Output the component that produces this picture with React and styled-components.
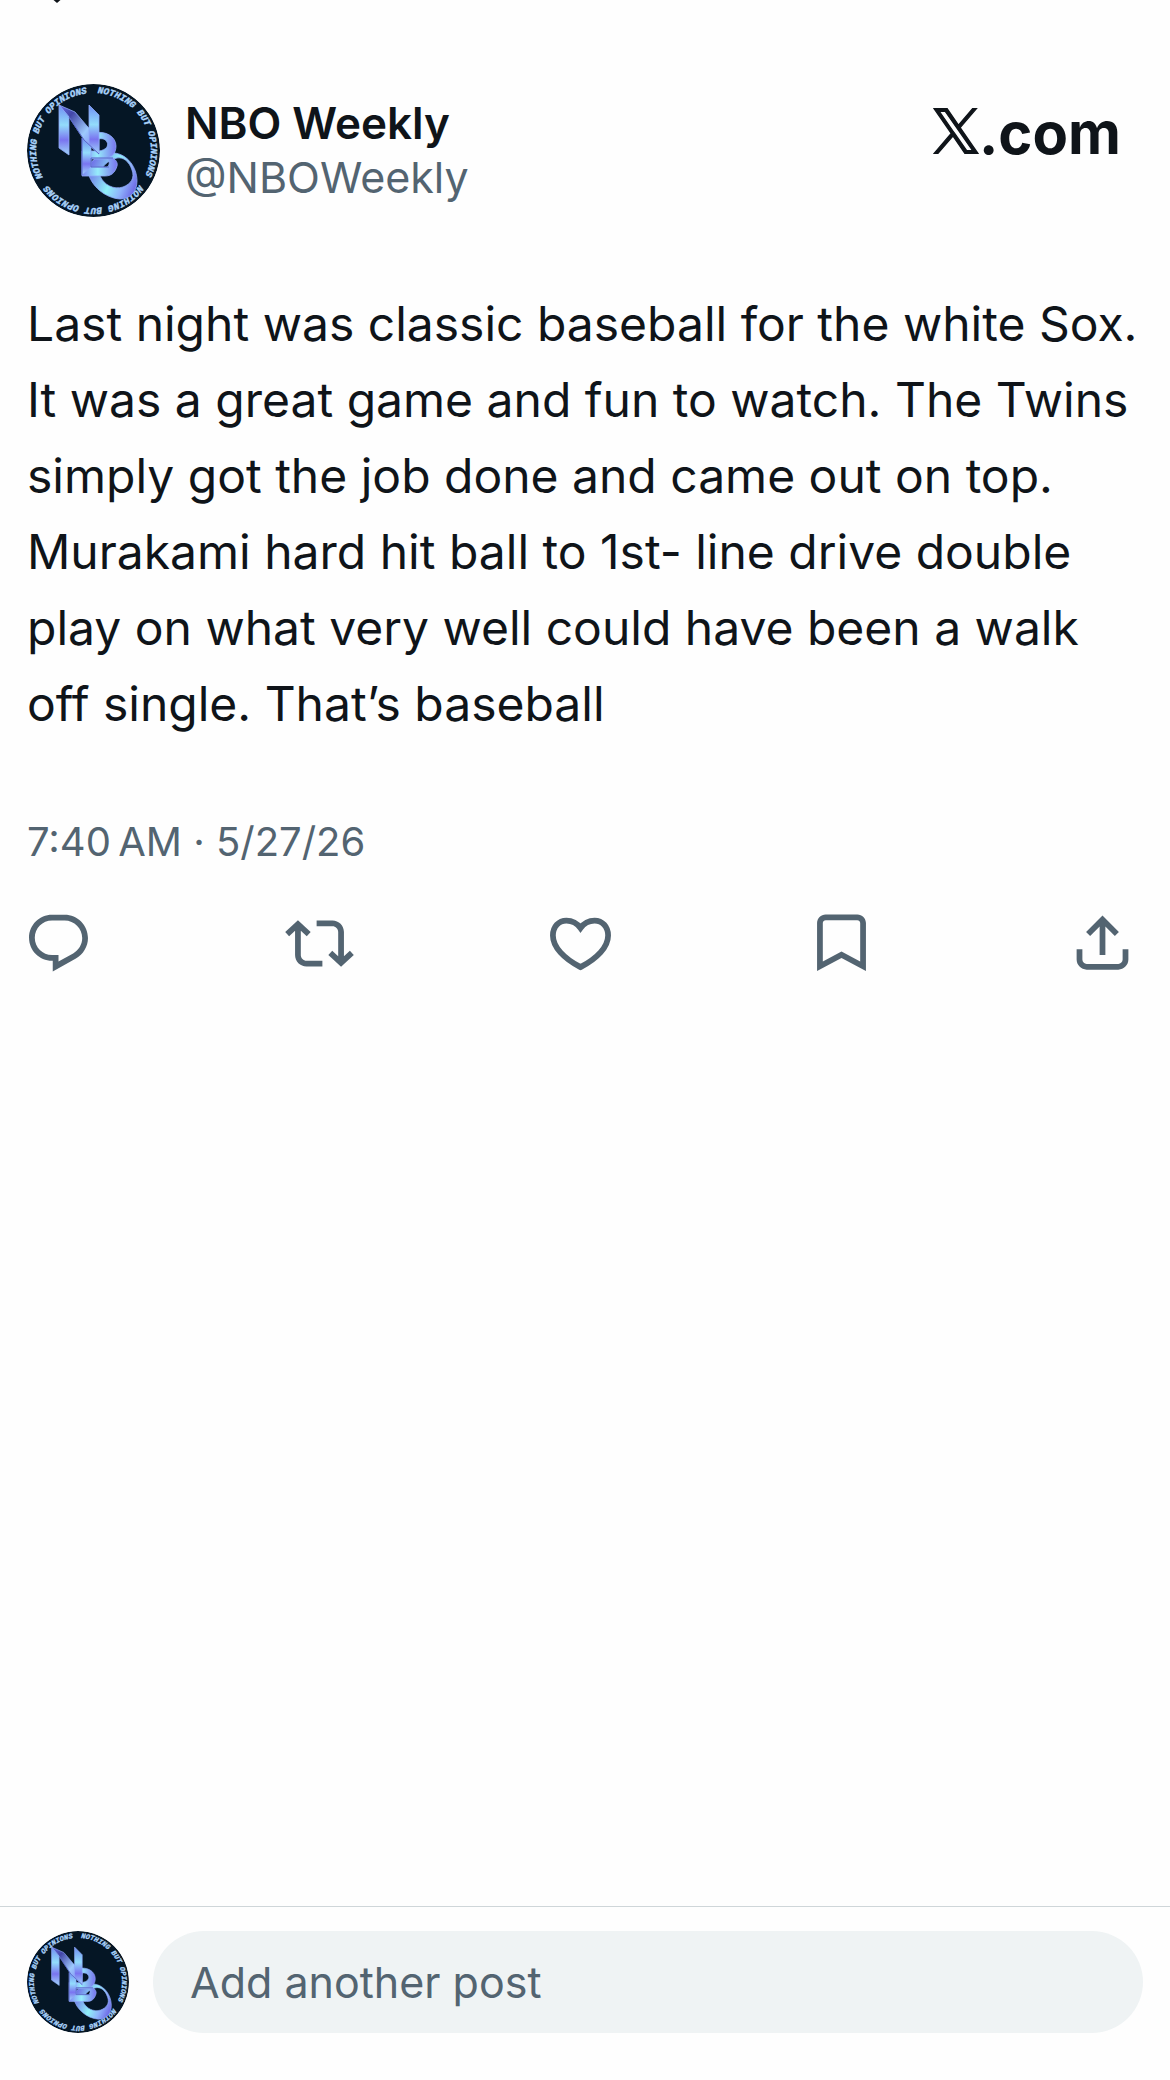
import React from 'react';
import styled, { createGlobalStyle } from 'styled-components';

const GlobalStyle = createGlobalStyle`
	* {
		box-sizing: border-box;
	}
	body {
		margin: 0;
		background: #fefefe;
		color: #0f1419;
		font-family: Inter, 'Liberation Sans', sans-serif;
	}
`;

const Page = styled.div`
	display: flex;
	flex-direction: column;
	min-height: 100vh;
`;

const BackEdge = styled.div`
	height: 4px;
	padding-left: 52px;
	overflow: hidden;

	svg {
		display: block;
	}
`;

const Post = styled.article`
	padding: 80px 26px 0 27px;
`;

const Header = styled.header`
	display: flex;
	align-items: flex-start;
	gap: 25px;
`;

const AvatarSvg = styled.svg`
	display: block;
	flex: none;
	width: ${props => props.$size}px;
	height: ${props => props.$size}px;
	border-radius: 50%;
`;

const Names = styled.div`
	flex: 1;
	padding-top: 12px;
	line-height: 54px;
`;

const DisplayName = styled.div`
	font-size: 44px;
	font-weight: 600;
`;

const Handle = styled.a`
	display: block;
	color: #536471;
	font-size: 43px;
	text-decoration: none;
`;

const Brand = styled.a`
	display: flex;
	align-items: baseline;
	padding: 14px 23px 0 0;
	color: #0f1419;
	font-size: 58px;
	font-weight: 700;
	line-height: 70px;
	text-decoration: none;
`;

const Body = styled.p`
	margin: 69px 0 0;
	font-size: 48px;
	line-height: 76px;
`;

const Time = styled.time`
	display: block;
	margin-top: 74px;
	color: #536471;
	font-size: 40px;
	line-height: 52px;
`;

const Actions = styled.div`
	display: flex;
	justify-content: space-between;
	padding: 41px 33px 0 24px;
`;

const ActionButton = styled.button`
	padding: 0;
	border: 0;
	background: none;
	color: #536471;

	svg {
		display: block;
		width: 69px;
		height: 69px;
	}
`;

const Composer = styled.form`
	display: flex;
	gap: 24px;
	margin-top: auto;
	padding: 24px 27px 47px;
	border-top: 1px solid #cfd6d9;
`;

const ReplyInput = styled.input`
	flex: 1;
	min-width: 0;
	height: 102px;
	padding: 0 37px;
	border: 0;
	border-radius: 51px;
	background: #eff3f4;
	color: #0f1419;
	font-family: inherit;
	font-size: 43px;

	&::placeholder {
		color: #536471;
		opacity: 1;
	}
`;

const RING_TEXTS = [
	{ text: 'NOTHING BUT OPINIONS', angle: 62 },
	{ text: 'NOTHING BUT OPINIONS', angle: 184 },
	{ text: 'NOTHING BUT OPNIONS', angle: 307 }
];

// The ring path starts at the lowest point and runs clockwise,
// so each slogan is rotated into place from there.
function Avatar({ id, size }) {
	return (
		<AvatarSvg $size={size} viewBox="0 0 133 133" role="img" aria-label="NBO Weekly">
			<defs>
				<path id={`${id}-ring`} d="M66.5 124a57.5 57.5 0 0 1 0-115a57.5 57.5 0 0 1 0 115" />
				<linearGradient id={`${id}-post`} x1="0" y1="0" x2="0" y2="1">
					<stop offset="0" stopColor="#6f8df2" />
					<stop offset="0.4" stopColor="#93dcfc" />
					<stop offset="0.7" stopColor="#7a74f0" />
					<stop offset="1" stopColor="#a0d8fb" />
				</linearGradient>
				<linearGradient id={`${id}-strap`} x1="0" y1="0" x2="1" y2="1">
					<stop offset="0" stopColor="#6a6ee8" />
					<stop offset="0.25" stopColor="#4347a8" />
					<stop offset="0.6" stopColor="#9dc9fd" />
					<stop offset="1" stopColor="#6f6cec" />
				</linearGradient>
				<linearGradient id={`${id}-bowl`} x1="0" y1="0" x2="1" y2="0">
					<stop offset="0" stopColor="#7e86f3" />
					<stop offset="0.45" stopColor="#96ecfb" />
					<stop offset="1" stopColor="#7873ee" />
				</linearGradient>
				<linearGradient id={`${id}-loop`} x1="0" y1="0.3" x2="1" y2="0.7">
					<stop offset="0" stopColor="#6d68e6" />
					<stop offset="0.5" stopColor="#8ff0f8" />
					<stop offset="0.75" stopColor="#8fb4fb" />
					<stop offset="1" stopColor="#6d68e6" />
				</linearGradient>
			</defs>
			<circle cx="66.5" cy="66.5" r="66.5" fill="#051625" />
			{RING_TEXTS.map(({ text, angle }) => (
				<text
					key={angle}
					transform={`rotate(${angle} 66.5 66.5)`}
					fill="#a9d2fb"
					stroke="#a9d2fb"
					strokeWidth="0.4"
					fontFamily="Liberation Mono, monospace"
					fontSize="9.3"
					fontWeight="700"
					fontStyle="italic"
				>
					<textPath href={`#${id}-ring`}>{text}</textPath>
				</text>
			))}
			<g stroke="#8fa9fa" strokeWidth="0.8" strokeLinejoin="round">
				<path
					fill={`url(#${id}-loop)`}
					fillRule="evenodd"
					d="M61 88C60 78 72 69 87 69C100 70 110 83 110 97C110 108 103 115 93 115C78 114 64 102 61 88ZM73 92C77 101 87 106 96 103C104 100 108 94 105 86C102 77 96 73 90 74C81 76 72 84 73 92Z"
				/>
				<path
					fill={`url(#${id}-bowl)`}
					fillRule="evenodd"
					d="M55 74H86C89 76 91 79 90 82C88 89 84 92 78 92H55ZM64 75V83H80C83 81 83 77 80 75Z"
				/>
				<path
					fill={`url(#${id}-bowl)`}
					fillRule="evenodd"
					d="M66 49C79 46 89 53 89 62C89 69 85 74 78 74H55V67H72C79 66 82 62 80 58C78 54 73 54 69 56Z"
				/>
				<path fill={`url(#${id}-post)`} d="M55 54L64 62V83L55 91Z" />
				<path fill={`url(#${id}-strap)`} d="M32 21L48 28L60 42L72 54V70L57 56L42 33Z" />
				<path fill={`url(#${id}-post)`} d="M32 21L42 33V71L32 64Z" />
				<path fill={`url(#${id}-post)`} d="M62 21L72 31V70L62 61Z" />
			</g>
			<path
				d="M42 33L57 56L72 70M64 74H86M64 83H82M64 74V83M55 54V91"
				fill="none"
				stroke="#4c55bb"
				strokeWidth="0.8"
			/>
		</AvatarSvg>
	);
}

const XLogo = () => (
	<svg
		width="46"
		height="46"
		viewBox="-15 -15 1230 1257"
		fill="currentColor"
		stroke="currentColor"
		strokeWidth="34"
		role="img"
		aria-label="X"
	>
		<path d="M714.163 519.284L1160.89 0H1055.03L667.137 450.887L357.328 0H0L468.492 681.821L0 1226.37H105.866L515.491 750.218L842.672 1226.37H1200L714.137 519.284H714.163ZM569.165 687.828L521.697 619.934L144.011 79.694H306.615L611.412 515.685L658.88 583.579L1055.08 1150.3H892.476L569.165 687.854V687.828Z" />
	</svg>
);

const ACTIONS = [
	{
		label: 'Reply',
		path:
			'M1.751 10c0-4.42 3.584-8 8.005-8h4.366c4.49 0 8.129 3.64 8.129 8.13 0 2.96-1.607 5.68-4.196 7.11l-8.054 4.46v-3.69h-.067c-4.49.1-8.183-3.51-8.183-8.01zm8.005-6c-3.317 0-6.005 2.69-6.005 6 0 3.37 2.77 6.08 6.138 6.01l.351-.01h1.761v2.3l5.087-2.81c1.951-1.08 3.163-3.13 3.163-5.36 0-3.39-2.744-6.13-6.129-6.13H9.756z'
	},
	{
		label: 'Repost',
		path:
			'M4.5 3.88l4.432 4.14-1.364 1.46L5.5 7.55V16c0 1.1.896 2 2 2H13v2H7.5c-2.209 0-4-1.79-4-4V7.55L1.432 9.48.068 8.02 4.5 3.88zM16.5 6H11V4h5.5c2.209 0 4 1.79 4 4v8.45l2.068-1.93 1.364 1.46-4.432 4.14-4.432-4.14 1.364-1.46 2.068 1.93V8c0-1.1-.896-2-2-2z'
	},
	{
		label: 'Like',
		stroke: true,
		path:
			'M12 6.6C10.8 4.9 9 4 7.1 4C4.4 4 2.4 6.2 2.4 9.2C2.4 13.2 6.2 17.2 12 20.2C17.8 17.2 21.6 13.2 21.6 9.2C21.6 6.2 19.6 4 16.9 4C15 4 13.2 4.9 12 6.6Z'
	},
	{
		label: 'Bookmark',
		path:
			'M3.5 4.9c0-1.66 1.34-3 3-3h11c1.66 0 3 1.34 3 3v16.7L12 17.05 3.5 21.6V4.9zm3-1c-.55 0-1 .45-1 1v13.35L12 14.8l6.5 3.45V4.9c0-.55-.45-1-1-1h-11z'
	},
	{
		label: 'Share',
		path:
			'M12 2.3l5.7 5.7-1.41 1.42L13 6.12V16h-2V6.12l-3.3 3.3L6.29 8 12 2.3zM21 14v3.6c0 1.93-1.57 3.5-3.5 3.5h-11C4.57 21.1 3 19.53 3 17.6V14h2v3.6c0 .83.67 1.5 1.5 1.5h11c.83 0 1.5-.67 1.5-1.5V14h2z'
	}
];

const App = () => (
	<Page>
		<GlobalStyle />
		<BackEdge>
			<svg width="10" height="4" viewBox="0 0 10 4">
				<path d="M1.5 0L5 3L8.5 0Z" fill="#0f1419" />
			</svg>
		</BackEdge>
		<Post>
			<Header>
				<Avatar id="author" size={133} />
				<Names>
					<DisplayName>NBO Weekly</DisplayName>
					<Handle href="#profile">@NBOWeekly</Handle>
				</Names>
				<Brand href="#home">
					<XLogo />
					<span>.com</span>
				</Brand>
			</Header>
			<Body>
				Last night was classic baseball for the white Sox. It was a great game and fun to watch.
				The Twins simply got the job done and came out on top. Murakami hard hit ball to 1st-
				line drive double play on what very well could have been a walk off single. That’s
				baseball
			</Body>
			<Time dateTime="2026-05-27T07:40">7:40{'\u202f'}AM · 5/27/26</Time>
		</Post>
		<Actions>
			{ACTIONS.map(({ label, path, stroke }) => (
				<ActionButton key={label} type="button" aria-label={label}>
					<svg
						viewBox="0 0 24 24"
						fill={stroke ? 'none' : 'currentColor'}
						stroke={stroke ? 'currentColor' : 'none'}
						strokeWidth="2"
					>
						<path d={path} />
					</svg>
				</ActionButton>
			))}
		</Actions>
		<Composer>
			<Avatar id="composer" size={102} />
			<ReplyInput type="text" placeholder="Add another post" aria-label="Add another post" />
		</Composer>
	</Page>
);

export default App;
